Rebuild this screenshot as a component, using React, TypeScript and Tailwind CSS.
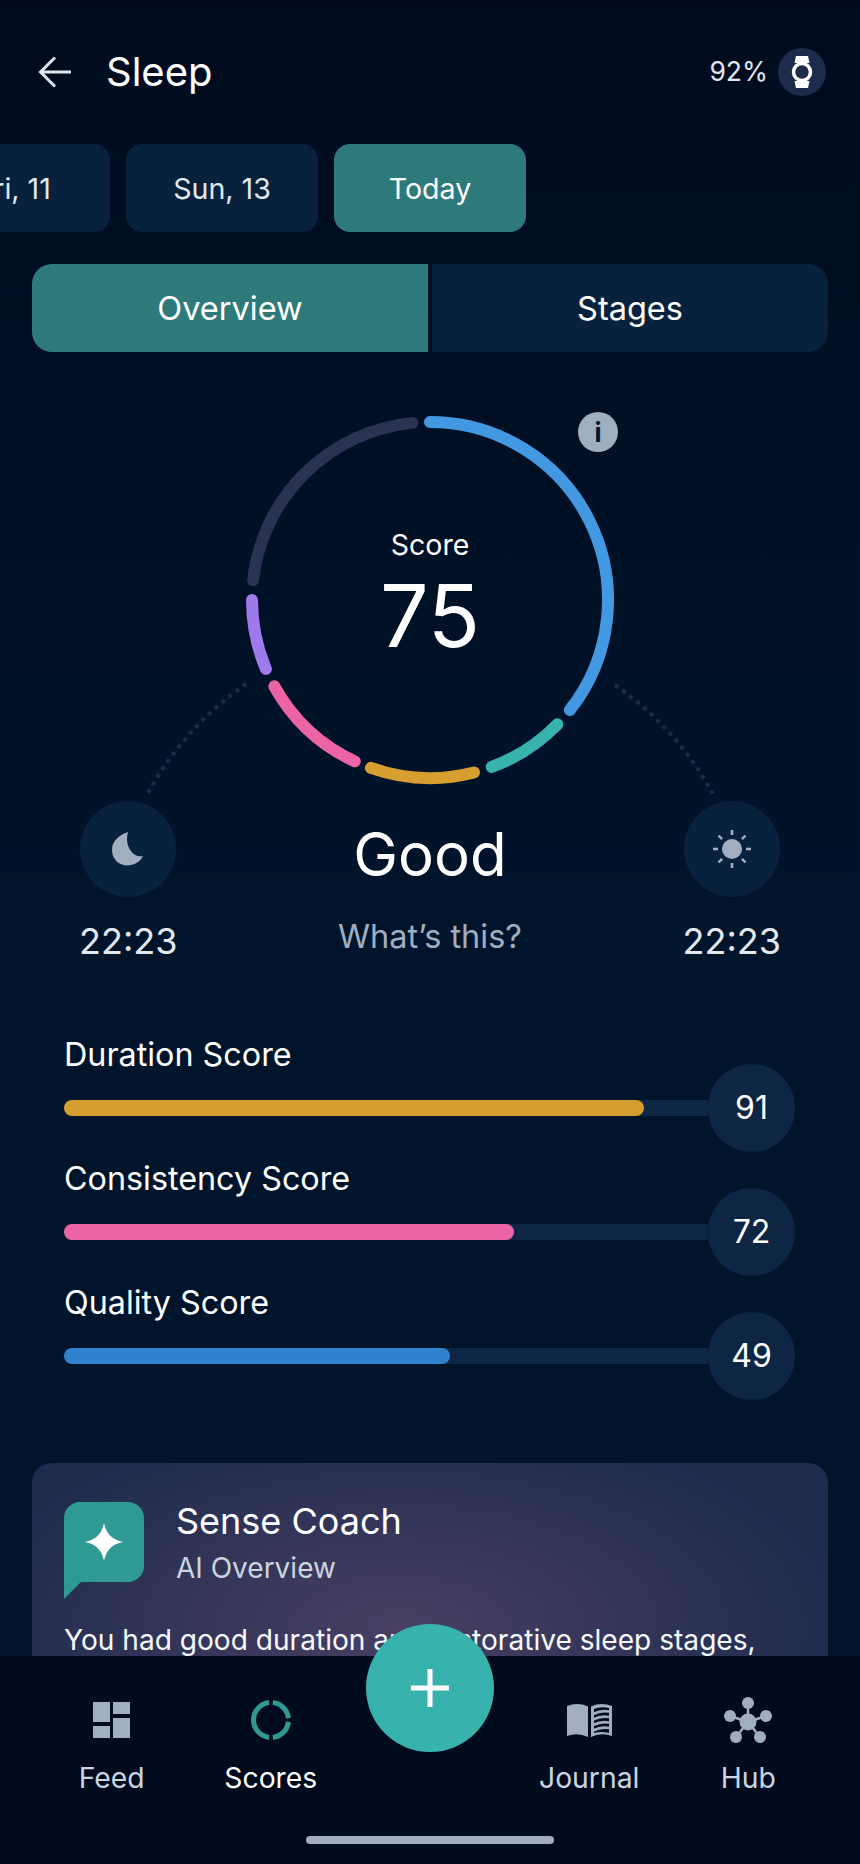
const CX = 430
const CY = 186
const R = 178

// clockwise degrees from the top of the ring
const segments = [
  { from: 0, to: 128.2, color: "#4299e1" },
  { from: 134.3, to: 159.7, color: "#38b2ac" },
  { from: 165.7, to: 199.4, color: "#d69e2e" },
  { from: 205, to: 241, color: "#ed64a6" },
  { from: 247.2, to: 270, color: "#9f7aea" },
  { from: 276.4, to: 354.3, color: "#2a3352" },
]

function arcPath(cx: number, cy: number, r: number, from: number, to: number) {
  const pt = (deg: number) => {
    const a = (deg * Math.PI) / 180
    return `${(cx + r * Math.sin(a)).toFixed(2)} ${(cy - r * Math.cos(a)).toFixed(2)}`
  }
  return `M${pt(from)} A${r} ${r} 0 ${to - from > 180 ? 1 : 0} 1 ${pt(to)}`
}

const scores = [
  { label: "Duration Score", value: 91, fill: "w-[580px]", color: "bg-[#d69e2e]" },
  { label: "Consistency Score", value: 72, fill: "w-[450px]", color: "bg-[#ed64a6]" },
  { label: "Quality Score", value: 49, fill: "w-[386px]", color: "bg-[#3182ce]" },
]

function BackIcon() {
  return (
    <svg width="34" height="32" viewBox="0 0 34 32" fill="none" stroke="#e2e8f0" strokeWidth="3" aria-hidden>
      <path d="M33 16H3M17 1.500 2.500 16 17 30.500" />
    </svg>
  )
}

function WatchIcon() {
  return (
    <svg width="22" height="32" viewBox="0 0 22 32" aria-hidden>
      <path d="M5 0h12l1.500 7h-15zM3.500 25h15L17 32H5z" fill="#fff" />
      <circle cx="11" cy="16" r="8.500" fill="none" stroke="#fff" strokeWidth="3.500" />
    </svg>
  )
}

function MoonIcon() {
  return (
    <svg width="32" height="34" viewBox="0 0 32 34" aria-hidden>
      <path d="M16 0C6 3 0 10 0 18c0 9 7 15.500 15 15.500 7 0 13-3.500 16-9.500-9 2.500-19-9-15-24z" fill="#a0aec0" />
    </svg>
  )
}

function SunIcon() {
  const rays = [0, 45, 90, 135, 180, 225, 270, 315]
  return (
    <svg width="38" height="38" viewBox="0 0 38 38" aria-hidden>
      <circle cx="19" cy="19" r="10" fill="#a0aec0" />
      {rays.map((deg) => (
        <rect key={deg} x="17.700" y="0" width="2.600" height="5" fill="#a0aec0" transform={`rotate(${deg} 19 19)`} />
      ))}
    </svg>
  )
}

function FeedIcon() {
  return (
    <svg width="37" height="36" viewBox="0 0 37 36" fill="#a0aec0" aria-hidden>
      <rect x="0" y="0" width="17" height="20" />
      <rect x="0" y="24" width="17" height="12" />
      <rect x="20" y="0" width="17" height="12" />
      <rect x="20" y="16" width="17" height="20" />
    </svg>
  )
}

function ScoresIcon() {
  return (
    <svg width="40" height="40" viewBox="0 0 40 40" fill="none" stroke="#2f9a94" strokeWidth="5" aria-hidden>
      <path d={arcPath(20, 20, 17.5, 6, 84)} />
      <path d={arcPath(20, 20, 17.5, 96, 174)} />
      <path d={arcPath(20, 20, 17.5, 186, 354)} />
    </svg>
  )
}

function JournalIcon() {
  return (
    <svg width="45" height="35" viewBox="0 0 45 35" aria-hidden>
      <path d="M0 3Q11-1 21 3.500V34Q11 29 0 33z" fill="#a0aec0" />
      <path d="M24 3.500Q34-1 45 3V33Q34 29 24 34z" fill="#a0aec0" />
      <path d="M27 6Q34 3 42 5V30Q34 28 27 30z" fill="#010b1e" />
      <path d="M26 11Q34 7 42 8.500M26 16.500Q34 12.500 42 14M26 22Q34 18 42 19.500M26 27.500Q34 23.500 42 25" fill="none" stroke="#a0aec0" strokeWidth="2.600" />
    </svg>
  )
}

function HubIcon() {
  const nodes = [
    [24, 6],
    [42, 19],
    [36, 40],
    [12, 40],
    [6, 19],
  ]
  return (
    <svg width="48" height="46" viewBox="0 0 48 46" fill="#a0aec0" stroke="#a0aec0" aria-hidden>
      {nodes.map(([x, y]) => (
        <g key={x}>
          <line x1="24" y1="25" x2={x} y2={y} strokeWidth="2.500" />
          <circle cx={x} cy={y} r="6" stroke="none" />
        </g>
      ))}
      <circle cx="24" cy="25" r="8.500" stroke="none" />
    </svg>
  )
}

function NavItem({ label, active, children }: { label: string; active?: boolean; children: React.ReactNode }) {
  return (
    <div className="flex flex-col items-center">
      <div className="h-12 flex items-center justify-center">{children}</div>
      <span className={`mt-4 text-[28.3px] leading-9 ${active ? "text-white" : "text-[#cbd5e0]"}`}>{label}</span>
    </div>
  )
}

export default function App() {
  return (
    <div className="h-[1864px] w-[860px] flex flex-col overflow-hidden bg-gradient-to-b from-[#010b1e] via-[#00142b] to-[#00142b] font-['Inter',sans-serif] text-white">
      <main className="flex-1 min-h-0 overflow-hidden">
        <header className="mt-12 h-12 flex items-center pl-[38px] pr-[34px]">
          <BackIcon />
          <h1 className="ml-[34px] text-[40px] leading-none">Sleep</h1>
          <span className="ml-auto text-[26.5px] text-[#e2e8f0]">92%</span>
          <span className="ml-[10px] h-12 w-12 rounded-full bg-[#1d2b4d] flex items-center justify-center">
            <WatchIcon />
          </span>
        </header>

        <div className="mt-12 flex gap-4 -ml-[82px] text-[28.6px]">
          <div className="h-[88px] w-48 pt-[2px] rounded-2xl bg-[#08213d] flex items-center justify-center text-[#e2e8f0]">Fri, 11</div>
          <div className="h-[88px] w-48 pt-[2px] rounded-2xl bg-[#08213d] flex items-center justify-center text-[#e2e8f0]">Sun, 13</div>
          <div className="h-[88px] w-48 pt-[2px] rounded-2xl bg-[#2e7a7a] flex items-center justify-center">Today</div>
        </div>

        <div className="mt-8 mx-8 flex gap-1 text-[32.5px]">
          <div className="h-[88px] flex-1 pt-[2px] rounded-l-[20px] bg-[#2e7a7a] flex items-center justify-center">Overview</div>
          <div className="h-[88px] flex-1 pt-[2px] rounded-r-[20px] bg-[#08213d] flex items-center justify-center">Stages</div>
        </div>

        <section className="relative mt-[62px]">
          <svg width="860" height="380" viewBox="0 0 860 380" fill="none" className="block" aria-hidden>
            {segments.map((s) => (
              <path key={s.from} d={arcPath(CX, CY, R, s.from, s.to)} stroke={s.color} strokeWidth="12" strokeLinecap="round" />
            ))}
            <path d="M148 379A320 320 0 0 1 246 270" stroke="#1e2a47" strokeWidth="4" strokeDasharray="4 5" />
            <path d="M615 271A320 320 0 0 1 713 380" stroke="#1e2a47" strokeWidth="4" strokeDasharray="4 5" />
          </svg>
          <div className="absolute left-0 right-0 top-[113px] flex flex-col items-center">
            <span className="text-[28.5px] leading-9">Score</span>
            <span className="mt-[3px] text-[86px] leading-[100px]">75</span>
          </div>
          <span className="absolute left-[578px] top-[-2px] h-10 w-10 rounded-full bg-[#a0aec0] flex items-center justify-center text-[26px] font-bold text-[#00142b]">
            i
          </span>
        </section>

        <section className="mt-[7px] px-[79px] flex justify-between">
          <div className="flex flex-col items-center">
            <div className="h-24 w-24 rounded-full bg-[#08213d] flex items-center justify-center">
              <MoonIcon />
            </div>
            <span className="mt-[22px] text-[36px] leading-[44px] text-[#e2e8f0]">22:23</span>
          </div>
          <div className="flex flex-col items-center">
            <span className="mt-[13px] text-[60px] leading-[80px]">Good</span>
            <span className="mt-[23px] text-[32.5px] leading-10 text-[#a0aec0]">What’s this?</span>
          </div>
          <div className="flex flex-col items-center">
            <div className="h-24 w-24 rounded-full bg-[#08213d] flex items-center justify-center">
              <SunIcon />
            </div>
            <span className="mt-[22px] text-[36px] leading-[44px] text-[#e2e8f0]">22:23</span>
          </div>
        </section>

        <section className="mt-[72px] ml-[64px] mr-[65px]">
          {scores.map((s) => (
            <div key={s.label} className="mb-[7px]">
              <div className="h-10 text-[32.3px] leading-10">{s.label}</div>
              <div className="-mt-[11px] flex items-center">
                <div className="flex-1 h-4 rounded-l-full bg-[#0d2646]">
                  <div className={`h-4 rounded-full ${s.fill} ${s.color}`} />
                </div>
                <div className="h-[88px] w-[87px] rounded-full bg-[#0c2644] flex items-center justify-center text-[32px]">
                  {s.value}
                </div>
              </div>
            </div>
          ))}
        </section>

        <section className="mt-[63px] mx-8 rounded-[20px] px-8 pt-[39px] pb-10 bg-[radial-gradient(ellipse_460px_220px_at_368px_165px,#483f63,#1d2b4d)]">
          <div className="flex">
            <svg width="80" height="97" viewBox="0 0 80 97" aria-hidden>
              <path d="M16 0H64A16 16 0 0 1 80 16V64A16 16 0 0 1 64 80H17L0 97V16A16 16 0 0 1 16 0Z" fill="#2f9a94" />
              <path d="M40 21Q43 37 59 40 43 43 40 59 37 43 21 40 37 37 40 21Z" fill="#fff" />
            </svg>
            <div className="ml-[32px] -mt-[1px]">
              <div className="text-[36px] leading-10">Sense Coach</div>
              <div className="mt-[9px] text-[28px] leading-9 text-[#cbd5e0]">AI Overview</div>
            </div>
          </div>
          <p className="mt-[21px] text-[28.1px] leading-10 whitespace-nowrap text-[#f7fafc]">You had good duration and restorative sleep stages,</p>
        </section>
      </main>

      <nav className="relative h-52 shrink-0 bg-[#010b1e] pt-10 px-8">
        <div className="grid grid-cols-5">
          <NavItem label="Feed">
            <FeedIcon />
          </NavItem>
          <NavItem label="Scores" active>
            <ScoresIcon />
          </NavItem>
          <div />
          <NavItem label="Journal">
            <JournalIcon />
          </NavItem>
          <NavItem label="Hub">
            <HubIcon />
          </NavItem>
        </div>
        <div className="absolute left-1/2 -top-8 -translate-x-1/2 h-32 w-32 rounded-full bg-[#38b2ac] flex items-center justify-center">
          <svg width="40" height="40" viewBox="0 0 40 40" aria-hidden>
            <path d="M20 1V39M1 20H39" stroke="#fff" strokeWidth="5" />
          </svg>
        </div>
        <div className="mt-10 mx-auto h-2 w-[248px] rounded-full bg-[#a0aec0]" />
      </nav>
    </div>
  )
}
